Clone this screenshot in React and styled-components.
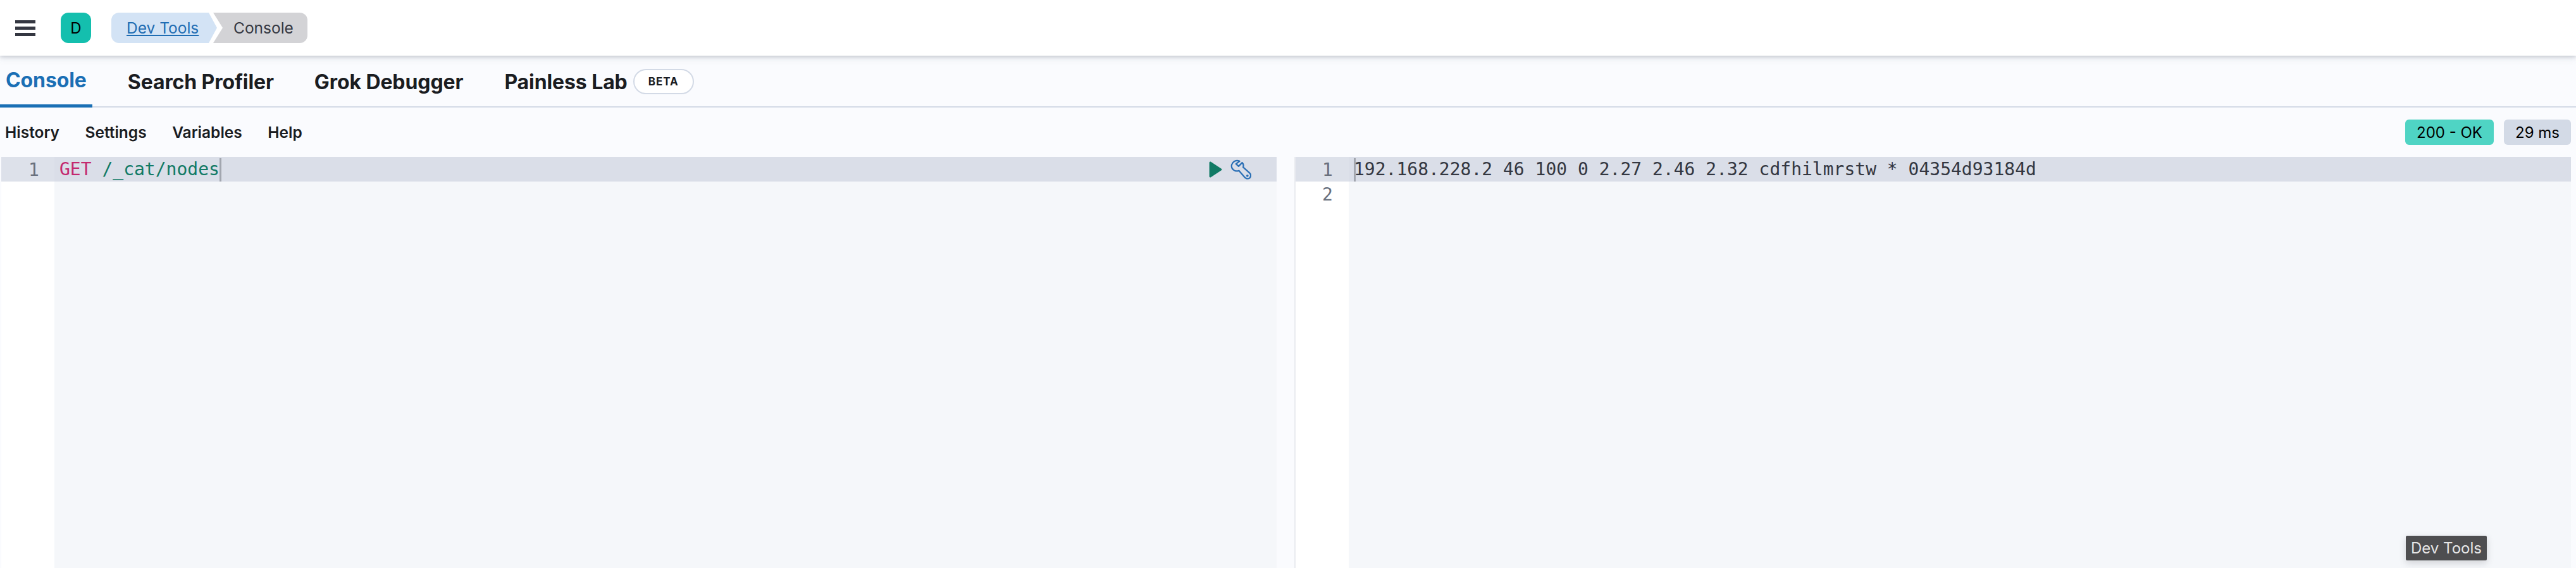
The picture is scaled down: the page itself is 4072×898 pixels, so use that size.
import styled, { createGlobalStyle } from 'styled-components'

const GlobalStyle = createGlobalStyle`
html, body {
    margin: 0;
    padding: 0;
    background: #fafbfe;
}
`

const Page = styled.div`
position: relative;
width: 4072px;
height: 898px;
overflow: hidden;
display: flex;
flex-direction: column;
font-family: Inter, "Liberation Sans", sans-serif;
background: #fafbfe;
`

const Header = styled.header`
position: relative;
z-index: 2;
flex: none;
height: 88px;
display: flex;
align-items: center;
background: #fff;
box-shadow: 0 2px 6px rgba(90, 100, 120, 0.28), 0 6px 10px rgba(90, 100, 120, 0.08);
`

const Burger = styled.div`
width: 32px;
height: 25px;
margin-left: 24px;
display: flex;
flex-direction: column;
justify-content: space-between;
span {
    display: block;
    height: 5px;
    background: #343741;
}
`

const Avatar = styled.div`
width: 48px;
height: 48px;
margin-left: 40px;
border-radius: 12px;
background: #14bfae;
color: #000;
font-size: 24px;
display: flex;
align-items: center;
justify-content: center;
`

const Breadcrumbs = styled.nav`
display: flex;
margin-left: 32px;
height: 48px;
`

const CrumbLink = styled.a`
width: 167px;
padding-left: 24px;
box-sizing: border-box;
display: flex;
align-items: center;
font-size: 24.5px;
color: #1f6db3;
text-decoration: underline;
background: #d3e3f5;
border-radius: 12px 0 0 12px;
clip-path: polygon(0 0, 154px 0, 100% 50%, 154px 100%, 0 100%);
`

const CrumbCurrent = styled.span`
width: 149px;
margin-left: -6px;
padding-left: 32px;
box-sizing: border-box;
display: flex;
align-items: center;
font-size: 24.5px;
color: #343741;
background: #d3d3d6;
border-radius: 0 12px 12px 0;
clip-path: polygon(0 0, 100% 0, 100% 100%, 0 100%, 15px 50%);
`

const Tabs = styled.div`
flex: none;
height: 82px;
box-sizing: border-box;
display: flex;
border-bottom: 2px solid #d3dae6;
`

const Tab = styled.div`
display: flex;
align-items: center;
gap: 9px;
height: 82px;
box-sizing: border-box;
padding: 0 9px;
margin-right: ${({$gap}) => $gap}px;
font-size: 32px;
font-weight: 700;
letter-spacing: -0.1px;
color: ${({$active}) => ($active ? '#1a6fb5' : '#1a1c21')};
border-bottom: ${({$active}) => ($active ? '5px solid #1a6fb5' : 'none')};
`

const BetaBadge = styled.span`
width: 96px;
height: 40px;
box-sizing: border-box;
display: flex;
align-items: center;
justify-content: center;
border: 2px solid #d3dae6;
border-radius: 20px;
background: #fff;
font-size: 17px;
font-weight: 700;
letter-spacing: 1px;
color: #1a1c21;
`

const Toolbar = styled.div`
flex: none;
height: 78px;
box-sizing: border-box;
display: flex;
align-items: center;
padding: 0 8px;
`

const Menu = styled.div`
display: flex;
gap: 40.5px;
font-size: 24.5px;
font-weight: 600;
color: #1a1c21;
`

const Status = styled.div`
display: flex;
align-items: center;
gap: 16px;
margin-left: auto;
`

const Badge = styled.span`
height: 40px;
box-sizing: border-box;
display: flex;
align-items: center;
justify-content: center;
width: ${({$width}) => $width}px;
border-radius: 6px;
font-size: 24px;
color: #000;
background: ${({$color}) => $color};
`

const Panes = styled.div`
flex: 1;
display: flex;
padding-left: 2px;
padding-right: 8px;
`

const Pane = styled.div`
position: relative;
display: flex;
flex: ${({$width}) => ($width ? `0 0 ${$width}px` : '1')};
margin-left: ${({$left}) => $left || 0}px;
border-left: ${({$line}) => ($line ? '2px solid #e9ebf0' : 'none')};
`

const Gutter = styled.div`
flex: none;
width: 84px;
background: #fff;
`

const LineNumber = styled.div`
height: 39px;
box-sizing: border-box;
padding-left: ${({$pad}) => $pad}px;
font: 28px/41px "DejaVu Sans Mono", monospace;
color: #69707d;
background: ${({$active}) => ($active ? '#dde1ea' : 'transparent')};
`

const Code = styled.div`
flex: 1;
background: #f5f7fa;
`

const CodeLine = styled.div`
height: 39px;
display: flex;
align-items: center;
box-sizing: border-box;
padding-left: ${({$pad}) => $pad}px;
background: ${({$active}) => ($active ? '#dadee8' : 'transparent')};
font: 28px/41px "DejaVu Sans Mono", monospace;
color: #343741;
white-space: pre;
`

const Method = styled.span`
color: #c4296f;
`

const Path = styled.span`
color: #117a65;
`

const Cursor = styled.span`
flex: none;
width: 3px;
height: 37px;
margin-top: 2px;
margin-right: ${({$over}) => ($over ? '-3px' : '0')};
background: #a2a6af;
`

const Actions = styled.div`
position: absolute;
top: 3px;
right: 40px;
display: flex;
align-items: center;
gap: 13px;
height: 34px;
`

const Tooltip = styled.div`
position: absolute;
left: 3803px;
top: 847px;
width: 128px;
height: 39px;
display: flex;
align-items: center;
justify-content: center;
background: #4e4e50;
border-radius: 2px;
font-size: 24px;
color: #e6e6e6;
box-shadow: 0 4px 12px rgba(60, 60, 70, 0.2);
`

const RunIcon = () => (
    <svg width="21" height="26" viewBox="0 0 20 25">
        <path d="M2 2 L18 12.5 L2 23 Z" fill="#117a65" stroke="#117a65" strokeWidth="3" strokeLinejoin="round" />
    </svg>
)

const WrenchIcon = () => (
    <svg width="33" height="33" viewBox="0 0 32 32" fill="none">
        <path
            d="M14 2.8 C9 0.5 3.5 3 2 8 C1 12 3 16 7 17.5 C9 18.2 11 18 13 17.3 L21 26.5 C23 29.5 27 30.5 29.5 28.5 C32 26 31.5 22.5 29 20.5 L19.5 12 C20.5 9 19.5 6.5 18 5 L12.5 10.5 L8.5 7 Z"
            stroke="#2a6fb5"
            strokeWidth="2.2"
            strokeLinejoin="round"
        />
        <circle cx="26" cy="25" r="1.8" fill="#2a6fb5" />
    </svg>
)

const App = () => {
    return (
        <Page>
            <GlobalStyle />
            <Header>
                <Burger><span /><span /><span /></Burger>
                <Avatar>D</Avatar>
                <Breadcrumbs>
                    <CrumbLink>Dev Tools</CrumbLink>
                    <CrumbCurrent>Console</CrumbCurrent>
                </Breadcrumbs>
            </Header>
            <Tabs>
                <Tab $active $gap={47}>Console</Tab>
                <Tab $gap={46}>Search Profiler</Tab>
                <Tab $gap={47}>Grok Debugger</Tab>
                <Tab>Painless Lab<BetaBadge>BETA</BetaBadge></Tab>
            </Tabs>
            <Toolbar>
                <Menu>
                    <span>History</span>
                    <span>Settings</span>
                    <span>Variables</span>
                    <span>Help</span>
                </Menu>
                <Status>
                    <Badge $width={140} $color="#4fd4c4">200 - OK</Badge>
                    <Badge $width={106} $color="#d3dae6">29 ms</Badge>
                </Status>
            </Toolbar>
            <Panes>
                <Pane $width={2016}>
                    <Gutter>
                        <LineNumber $active $pad={43}>1</LineNumber>
                    </Gutter>
                    <Code>
                        <CodeLine $active $pad={8}>
                            <span><Method>GET</Method> <Path>/_cat/nodes</Path></span>
                            <Cursor />
                        </CodeLine>
                    </Code>
                    <Actions>
                        <RunIcon />
                        <WrenchIcon />
                    </Actions>
                </Pane>
                <Pane $left={28} $line>
                    <Gutter>
                        <LineNumber $active $pad={42}>1</LineNumber>
                        <LineNumber $pad={42}>2</LineNumber>
                    </Gutter>
                    <Code>
                        <CodeLine $active $pad={8}>
                            <Cursor $over />
                            <span>192.168.228.2 46 100 0 2.27 2.46 2.32 cdfhilmrstw * 04354d93184d</span>
                        </CodeLine>
                    </Code>
                </Pane>
            </Panes>
            <Tooltip>Dev Tools</Tooltip>
        </Page>
    )
}

export default App
